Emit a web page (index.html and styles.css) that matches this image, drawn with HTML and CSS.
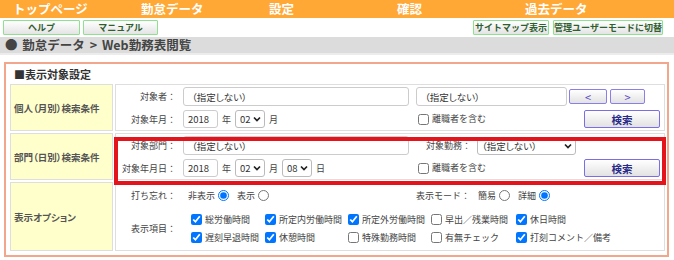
FILE: index.html
```html
<!DOCTYPE html>
<html lang="ja">
<head>
    <meta charset="UTF-8">
    <meta name="viewport" content="width=device-width, initial-scale=1.0">
    <title>Web勤務表閲覧</title>
    <link rel="stylesheet" href="styles.css">
</head>
<body>
    <nav class="topnav">
        <a>トップページ</a>
        <a>勤怠データ</a>
        <a>設定</a>
        <a>確認</a>
        <a>過去データ</a>
    </nav>

    <div class="toolbar">
        <div class="tool-group">
            <button class="tool-btn help">ヘルプ</button>
            <button class="tool-btn manual">マニュアル</button>
        </div>
        <div class="tool-group right">
            <button class="tool-btn sitemap">サイトマップ表示</button>
            <button class="tool-btn admin">管理ユーザーモードに切替</button>
        </div>
    </div>

    <div class="breadcrumb">● 勤怠データ &gt; Web勤務表閲覧</div>

    <div class="panel">
        <div class="panel-title">■表示対象設定</div>
        <table class="cond-table">
            <tr class="row-person">
                <th>個人（月別）検索条件</th>
                <td>
                    <div class="cond">
                        <span class="lbl">対象者：</span>
                        <input class="txt wide" type="text" value="（指定しない）" readonly>
                        <div class="line">
                            <input class="txt mid" type="text" value="（指定しない）" readonly>
                            <button class="nav-btn prev">&lt;</button>
                            <button class="nav-btn next">&gt;</button>
                        </div>

                        <span class="lbl">対象年月：</span>
                        <div class="date">
                            <input class="txt year" type="text" value="2018">
                            <span>年</span>
                            <span class="sel sm">
                                <select><option>02</option></select>
                                <svg viewBox="0 0 8 6"><path d="M1 1.5l3 3 3-3"/></svg>
                            </span>
                            <span>月</span>
                        </div>
                        <div class="line">
                            <label class="chk"><input type="checkbox">離職者を含む</label>
                            <button class="search-btn">検索</button>
                        </div>
                    </div>
                </td>
            </tr>
            <tr class="row-dept">
                <th>部門（日別）検索条件</th>
                <td class="highlight">
                    <div class="cond">
                        <span class="lbl">対象部門：</span>
                        <input class="txt wide" type="text" value="（指定しない）" readonly>
                        <div class="line work">
                            <span>対象勤務：</span>
                            <span class="sel dept">
                                <select><option>（指定しない）</option></select>
                                <svg viewBox="0 0 8 6"><path d="M1 1.5l3 3 3-3"/></svg>
                            </span>
                        </div>

                        <span class="lbl">対象年月日：</span>
                        <div class="date">
                            <input class="txt year" type="text" value="2018">
                            <span>年</span>
                            <span class="sel sm">
                                <select><option>02</option></select>
                                <svg viewBox="0 0 8 6"><path d="M1 1.5l3 3 3-3"/></svg>
                            </span>
                            <span>月</span>
                            <span class="sel sm">
                                <select><option>08</option></select>
                                <svg viewBox="0 0 8 6"><path d="M1 1.5l3 3 3-3"/></svg>
                            </span>
                            <span>日</span>
                        </div>
                        <div class="line">
                            <label class="chk"><input type="checkbox">離職者を含む</label>
                            <button class="search-btn">検索</button>
                        </div>
                    </div>
                </td>
            </tr>
            <tr class="row-option">
                <th>表示オプション</th>
                <td>
                    <div class="cond opt">
                        <span class="lbl">打ち忘れ：</span>
                        <div class="radios forgot">
                            <label>非表示<input type="radio" name="forgot" checked></label>
                            <label>表示<input type="radio" name="forgot"></label>
                        </div>
                        <div class="radios">
                            <span>表示モード：</span>
                            <label>簡易<input type="radio" name="mode"></label>
                            <label>詳細<input type="radio" name="mode" checked></label>
                        </div>

                        <span class="lbl">表示項目：</span>
                        <div class="items">
                            <label class="chk"><input type="checkbox" checked>総労働時間</label>
                            <label class="chk"><input type="checkbox" checked>所定内労働時間</label>
                            <label class="chk"><input type="checkbox" checked>所定外労働時間</label>
                            <label class="chk"><input type="checkbox">早出／残業時間</label>
                            <label class="chk"><input type="checkbox" checked>休日時間</label>
                            <label class="chk"><input type="checkbox" checked>遅刻早退時間</label>
                            <label class="chk"><input type="checkbox" checked>休憩時間</label>
                            <label class="chk"><input type="checkbox">特殊勤務時間</label>
                            <label class="chk"><input type="checkbox">有無チェック</label>
                            <label class="chk"><input type="checkbox" checked>打刻コメント／備考</label>
                        </div>
                    </div>
                </td>
            </tr>
        </table>
    </div>
</body>
</html>
```

FILE: styles.css
```css
* {
    margin: 0;
    padding: 0;
    box-sizing: border-box;
}

body {
    font-family: "Noto Sans CJK JP", "Noto Sans", sans-serif;
    font-size: 9px;
    color: #444;
    background: #fff;
    width: 674px;
}

/* top menu */
.topnav {
    display: grid;
    grid-template-columns: repeat(5, 128px);
    height: 18px;
    background: #ffa836;
}

.topnav a {
    padding-left: 13px;
    color: #fff;
    font-size: 12.5px;
    font-weight: bold;
    line-height: 18px;
}

.toolbar {
    display: flex;
    justify-content: space-between;
    align-items: center;
    height: 19px;
    padding: 0 11px 0 3px;
}

.tool-group {
    display: flex;
    gap: 3px;
}

.tool-group.right {
    gap: 4px;
}

.tool-btn {
    height: 15px;
    border: 1px solid #8fe08f;
    border-radius: 1px;
    background: linear-gradient(#ffffff, #e4e4e4);
    color: #2f5e2f;
    font-family: inherit;
    font-size: 9px;
    font-weight: bold;
    line-height: 13px;
}

.tool-btn.help { width: 77px; }
.tool-btn.manual { width: 75px; }
.tool-btn.sitemap { width: 76px; }
.tool-btn.admin { width: 110px; }

.breadcrumb {
    height: 18px;
    padding-left: 5px;
    background: #dcdcdc;
    border-bottom: 2px solid #ececec;
    color: #444;
    font-size: 12.5px;
    font-weight: bold;
    line-height: 16px;
    word-spacing: 2px;
}

/* search panel */
.panel {
    margin: 7px 5px 0 4px;
    border: 2px solid #f2a68c;
    padding: 3px 0 2px 2px;
}

.panel-title {
    padding-left: 6px;
    color: #333;
    font-size: 11px;
    font-weight: bold;
    line-height: 15px;
}

.cond-table {
    width: 100%;
    border-collapse: separate;
    border-spacing: 2px;
}

.cond-table th {
    width: 103px;
    padding-left: 3px;
    background: #ffffcc;
    border: 1px solid #dedede;
    color: #555;
    font-size: 9.5px;
    font-weight: bold;
    text-align: left;
    font-feature-settings: "palt";
}

.cond-table td {
    border: 1px solid #dedede;
    padding: 0 4px 0 0;
}

.row-person td,
.row-dept td {
    height: 47px;
}

.row-option td {
    height: 69px;
}

.cond {
    display: grid;
    grid-template-columns: 60px 226px 1fr;
    column-gap: 7px;
    row-gap: 4px;
    align-items: center;
}

.lbl {
    text-align: right;
    white-space: nowrap;
}

.line {
    display: flex;
    align-items: center;
}

.line.work {
    padding-left: 10px;
    gap: 6px;
}

.date {
    display: flex;
    align-items: center;
    gap: 4px;
}

.txt {
    height: 19px;
    border: 1px solid #ccc;
    border-radius: 3px;
    padding: 0 8px;
    color: #333;
    font-family: inherit;
    font-size: 9.5px;
    font-feature-settings: "palt";
}

.txt.wide { width: 226px; }
.txt.mid { width: 151px; }

.txt.year {
    width: 35px;
    height: 18px;
    padding: 0 4px;
}

/* select box with its own chevron */
.sel {
    position: relative;
    display: inline-flex;
}

.sel select {
    -webkit-appearance: none;
    appearance: none;
    width: 100%;
    height: 18px;
    border: 1px solid #bbb;
    border-radius: 3px;
    background: #fff;
    color: #333;
    font-family: inherit;
    font-size: 9.5px;
    padding: 0 12px 0 4px;
    font-feature-settings: "palt";
}

.sel svg {
    position: absolute;
    right: 4px;
    top: 6px;
    width: 8px;
    height: 6px;
    fill: none;
    stroke: #222;
    stroke-width: 1.7;
    pointer-events: none;
}

.sel.sm { width: 30px; }
.sel.dept { width: 99px; }

.nav-btn {
    height: 15px;
    border: 1px solid #8a7ee8;
    border-radius: 2px;
    background: linear-gradient(#ffffff, #e2e2e2);
    color: #5a48c8;
    font-family: inherit;
    font-size: 11px;
    line-height: 12px;
}

.nav-btn.prev {
    width: 38px;
    margin-left: 2px;
}

.nav-btn.next {
    width: 35px;
    margin-left: 3px;
}

.search-btn {
    width: 76px;
    height: 18px;
    margin-left: auto;
    border: 1px solid #7a6ee6;
    border-radius: 2px;
    background: linear-gradient(#ffffff, #e2e2e2);
    color: #2a2a8a;
    font-family: inherit;
    font-size: 10.5px;
    font-weight: bold;
}

.chk {
    display: flex;
    align-items: center;
    white-space: nowrap;
    line-height: 14px;
}

.chk input {
    width: 11px;
    height: 11px;
    margin: 0 3px 0 2px;
}

/* display options */
.opt {
    row-gap: 11px;
}

.radios {
    display: flex;
    align-items: center;
    gap: 8px;
}

.radios.forgot {
    padding-left: 5px;
}

.radios label {
    display: flex;
    align-items: center;
    gap: 3px;
}

.radios input {
    width: 11px;
    height: 11px;
    margin: 0;
}

.items {
    grid-column: 2 / 4;
    display: grid;
    grid-template-columns: 74px 83px 83px 85px auto;
    row-gap: 4px;
    padding-left: 6px;
}

/* red annotation box around the department conditions */
.highlight {
    position: relative;
}

.highlight::after {
    content: '';
    position: absolute;
    left: -2px;
    right: -2px;
    top: 3px;
    bottom: -6px;
    border: 4px solid #e4141c;
    pointer-events: none;
}
```
